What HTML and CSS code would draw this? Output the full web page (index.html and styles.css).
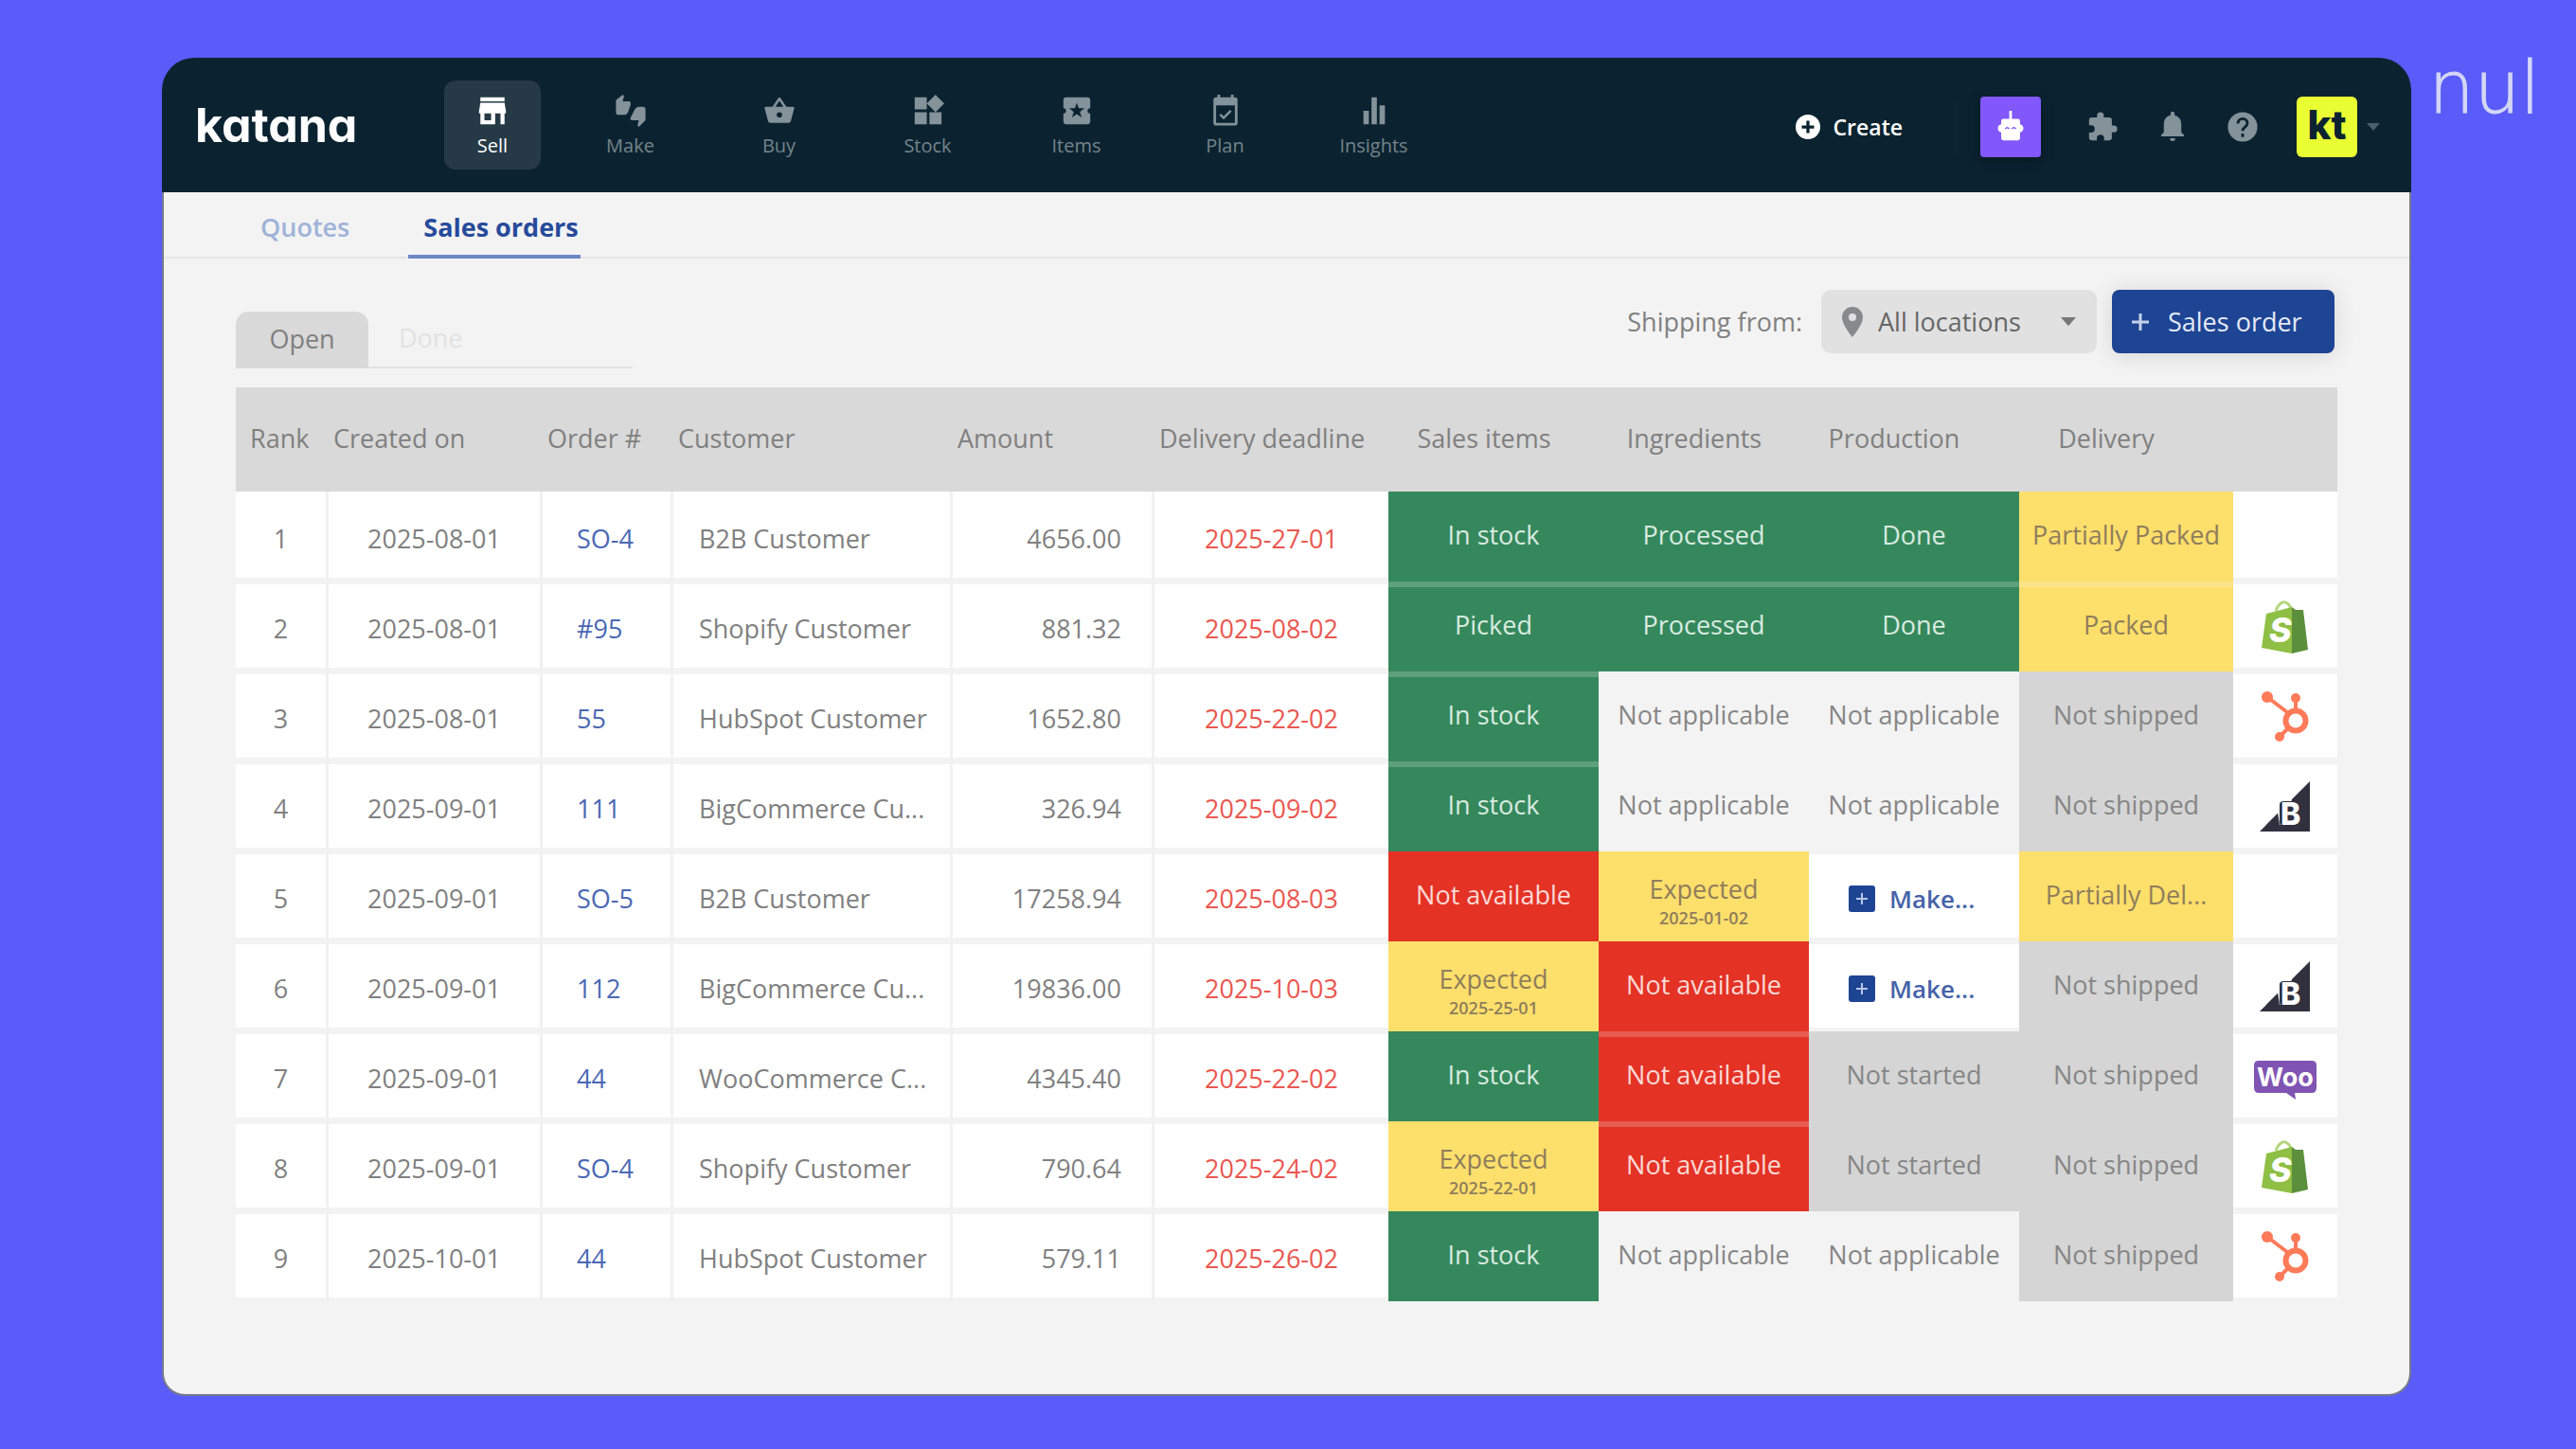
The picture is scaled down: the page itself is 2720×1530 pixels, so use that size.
FILE: index.html
```html
<!DOCTYPE html>
<html lang="en">
<head>
  <meta charset="utf-8">
  <title>Sales orders</title>
  <link rel="stylesheet" href="styles.css">
</head>
<body>
  <!-- shared icons -->
  <svg class="defs" aria-hidden="true">
    <symbol id="shopify" viewBox="0 0 50 56">
      <path d="M15 11C18 3 23 0 27 3c3 2 4 5 4 8" fill="none" stroke="#b5d67f" stroke-width="3"/>
      <path d="M5 14 L32 7 V56 L0 50z" fill="#8fbf45"/>
      <path d="M32 7l4 3h8l5 42-17 4z" fill="#5c8f3c"/>
      <text x="8" y="44" class="mark-s">S</text>
    </symbol>
    <symbol id="hubspot" viewBox="0 0 50 54">
      <g fill="none" stroke="#ff7a59" stroke-width="4">
        <path d="M6 6l21 16M36 20V8M28 39l-8 8"/>
        <circle cx="36" cy="31" r="10.500" stroke-width="6"/>
      </g>
      <g fill="#ff7a59"><circle cx="6" cy="6" r="6"/><circle cx="36" cy="7" r="5"/><circle cx="19" cy="48" r="5"/></g>
    </symbol>
    <symbol id="bigcommerce" viewBox="0 0 54 54">
      <path d="M53 0v53H0z" fill="#30303f"/>
      <path d="M34 17l-15 15 2 14h10z" fill="#fff"/>
      <path d="M19 34v12H7z" fill="#30303f"/>
      <rect x="21" y="21" width="23" height="26" rx="4" fill="#30303f"/>
      <text x="22" y="46" class="mark-b">B</text>
    </symbol>
    <symbol id="woo" viewBox="0 0 66 42">
      <path d="M5 0h56q5 0 5 5v23q0 6-5 6H43l1 7-10-7H5q-5 0-5-6V5q0-5 5-5z" fill="#7f54b3"/>
      <text x="33" y="27" class="mark-woo">Woo</text>
    </symbol>
  </svg>

  <div class="nul">nul</div>

  <div class="window">
    <header class="topbar">
      <a class="logo" href="#">katana</a>
      <nav class="menu">
        <a class="menu-item active" href="#">
          <svg viewBox="0 0 24 24"><path d="M3 2h18v3H3zM3 6h18l1 6v2h-1v8h-3v-8h-4v8H3v-8H2v-2zM6 14v5h5v-5z" fill-rule="evenodd"/></svg>
          <span>Sell</span>
        </a>
        <a class="menu-item" href="#">
          <svg viewBox="0 0 24 24"><path d="M1 4l5-4 1 1-1 4h5q1 0 1 2l-2 6q-1 2-3 2H3q-2 0-2-2z"/><path d="M23 19l-5 5-1-1 1-4h-5q-2 0-1-2l3-6q1-2 3-2h3q2 0 2 2z"/></svg>
          <span>Make</span>
        </a>
        <a class="menu-item" href="#">
          <svg viewBox="0 0 24 24"><path d="M17.200 9L12.800 2.400a1 1 0 0 0-1.600 0L6.800 9H2a1 1 0 0 0-1 1.300l2.500 9.200A2 2 0 0 0 5.500 21h13a2 2 0 0 0 2-1.500L23 10.300A1 1 0 0 0 22 9zM9 9l3-4.400L15 9zm3 8a2 2 0 1 1 0-4 2 2 0 0 1 0 4z"/></svg>
          <span>Buy</span>
        </a>
        <a class="menu-item" href="#">
          <svg viewBox="0 0 24 24"><path d="M2 2h9v9H2zM2 13h9v9H2zM13 13h9v9h-9zM17.500 0L24 6.500 17.500 13 11 6.500z"/></svg>
          <span>Stock</span>
        </a>
        <a class="menu-item" href="#">
          <svg viewBox="0 0 24 24"><path d="M20 12a2 2 0 0 1 2-2V4a2 2 0 0 0-2-2H4a2 2 0 0 0-2 2v6a2 2 0 0 1 0 4v6a2 2 0 0 0 2 2h16a2 2 0 0 0 2-2v-6a2 2 0 0 1-2-2zm-4.400 5L12 14.500 8.400 17l1.300-4.200L6.300 10h4.300L12 6l1.400 4h4.300l-3.400 2.800z"/></svg>
          <span>Items</span>
        </a>
        <a class="menu-item" href="#">
          <svg viewBox="0 0 24 24"><path d="M19 2h-1V0h-2v2H8V0H6v2H5a2 2 0 0 0-2 2v17a2 2 0 0 0 2 2h14a2 2 0 0 0 2-2V4a2 2 0 0 0-2-2zm0 19H5V8h14zM10.600 18.500l6-6-1.200-1.200-4.800 4.800-2-2L7.400 15.300z"/></svg>
          <span>Plan</span>
        </a>
        <a class="menu-item" href="#">
          <svg viewBox="0 0 24 24"><path d="M4 12h4v10H4zM10 2h4v20h-4zM16 8h4v14h-4z"/></svg>
          <span>Insights</span>
        </a>
      </nav>
      <div class="tools">
        <button class="create">
          <svg viewBox="0 0 24 24"><circle cx="12" cy="12" r="12" fill="#fff"/><path d="M12 6v12M6 12h12" stroke="#0b2330" stroke-width="3"/></svg>
          Create
        </button>
        <button class="robot" aria-label="Assistant">
          <svg viewBox="0 0 40 48"><path d="M18 0h4v12h9q3 0 3 3v5q5 1 5 6t-5 6v9q0 3-3 3H9q-3 0-3-3v-9q-5-1-5-6t5-6v-5q0-3 3-3h9z" fill="#fff"/><path d="M12 27q3-4 6 0M22 27q3-4 6 0" fill="none" stroke="#8257fb" stroke-width="2"/></svg>
        </button>
        <div class="tool-icons">
          <button aria-label="Integrations"><svg viewBox="0 0 24 24"><path d="M20.500 11H19V7a2 2 0 0 0-2-2h-4V3.500a2.500 2.500 0 0 0-5 0V5H4a2 2 0 0 0-2 2v3.800h1.500a2.700 2.700 0 0 1 0 5.400H2V20a2 2 0 0 0 2 2h3.800v-1.500a2.700 2.700 0 0 1 5.400 0V22H17a2 2 0 0 0 2-2v-4h1.500a2.500 2.500 0 0 0 0-5z"/></svg></button>
          <button aria-label="Notifications"><svg viewBox="0 0 24 24"><path d="M12 22.500a2 2 0 0 0 2-2h-4a2 2 0 0 0 2 2zM18.500 16v-6c0-3.500-1.800-6-5-6.700V2a1.500 1.500 0 0 0-3 0v1.300c-3.200.7-5 3.200-5 6.700v6l-2 2v1h17v-1z"/></svg></button>
          <button aria-label="Help"><svg viewBox="0 0 24 24"><circle cx="12" cy="12" r="11"/><path d="M8.500 9.500C8.500 4.500 15.500 5 15.500 9.300c0 2.700-3.500 2.900-3.500 5.700M12 17v2.500" fill="none" stroke="#0b2330" stroke-width="2"/></svg></button>
        </div>
        <button class="account"><span class="tile">kt</span><svg class="caret" viewBox="0 0 14 8"><path d="M0 0h14L7 8z"/></svg></button>
      </div>
    </header>

    <main class="page">
      <nav class="tabs">
        <a href="#">Quotes</a>
        <a class="active" href="#">Sales orders</a>
      </nav>

      <div class="toolbar">
        <div class="state-tabs">
          <button class="active">Open</button>
          <button>Done</button>
        </div>
        <div class="actions">
          <label for="location">Shipping from:</label>
          <div class="location">
            <svg class="pin" viewBox="0 0 22 32"><path d="M11 0a11 11 0 0 0-11 11c0 8 11 21 11 21s11-13 11-21A11 11 0 0 0 11 0zm0 15a4 4 0 1 1 0-8 4 4 0 0 1 0 8z"/></svg>
            <select id="location"><option>All locations</option></select>
            <svg class="caret" viewBox="0 0 14 8"><path d="M0 0h14L7 8z"/></svg>
          </div>
          <button class="new-order"><svg viewBox="0 0 18 18"><path d="M9 0v18M0 9h18"/></svg>Sales order</button>
        </div>
      </div>

      <table class="orders">
        <colgroup>
          <col class="c-rank"><col class="c-created"><col class="c-order"><col class="c-customer"><col class="c-amount"><col class="c-deadline">
          <col class="c-status"><col class="c-status"><col class="c-status"><col class="c-delivery"><col class="c-source">
        </colgroup>
        <thead>
          <tr>
            <th class="rank">Rank</th><th>Created on</th><th>Order #</th><th>Customer</th><th>Amount</th><th>Delivery deadline</th>
            <th class="mid">Sales items</th><th class="mid">Ingredients</th><th class="mid far">Production</th><th class="mid far">Delivery</th><th></th>
          </tr>
        </thead>
        <tbody>
          <tr>
            <td class="center">1</td><td class="center">2025-08-01</td><td class="order"><a href="#">SO-4</a></td><td class="customer">B2B Customer</td><td class="amount">4656.00</td><td class="late">2025-27-01</td>
            <td class="status green">In stock</td><td class="status green">Processed</td><td class="status green">Done</td><td class="status yellow">Partially Packed</td><td class="source"></td>
          </tr>
          <tr>
            <td class="center">2</td><td class="center">2025-08-01</td><td class="order"><a href="#">#95</a></td><td class="customer">Shopify Customer</td><td class="amount">881.32</td><td class="late">2025-08-02</td>
            <td class="status green seam">Picked</td><td class="status green seam">Processed</td><td class="status green seam">Done</td><td class="status yellow seam">Packed</td><td class="source"><svg class="shopify"><use href="#shopify"/></svg></td>
          </tr>
          <tr>
            <td class="center">3</td><td class="center">2025-08-01</td><td class="order"><a href="#">55</a></td><td class="customer">HubSpot Customer</td><td class="amount">1652.80</td><td class="late">2025-22-02</td>
            <td class="status green seam">In stock</td><td class="status na">Not applicable</td><td class="status na">Not applicable</td><td class="status grey">Not shipped</td><td class="source"><svg class="hubspot"><use href="#hubspot"/></svg></td>
          </tr>
          <tr>
            <td class="center">4</td><td class="center">2025-09-01</td><td class="order"><a href="#">111</a></td><td class="customer">BigCommerce Cu...</td><td class="amount">326.94</td><td class="late">2025-09-02</td>
            <td class="status green seam">In stock</td><td class="status na">Not applicable</td><td class="status na">Not applicable</td><td class="status grey">Not shipped</td><td class="source"><svg class="bigcommerce"><use href="#bigcommerce"/></svg></td>
          </tr>
          <tr>
            <td class="center">5</td><td class="center">2025-09-01</td><td class="order"><a href="#">SO-5</a></td><td class="customer">B2B Customer</td><td class="amount">17258.94</td><td class="late">2025-08-03</td>
            <td class="status red">Not available</td><td class="status yellow due">Expected<small>2025-01-02</small></td><td class="make"><button><svg viewBox="0 0 28 28"><rect width="28" height="28" rx="3"/><path d="M14 8v12M8 14h12"/></svg>Make...</button></td><td class="status yellow">Partially Del...</td><td class="source"></td>
          </tr>
          <tr>
            <td class="center">6</td><td class="center">2025-09-01</td><td class="order"><a href="#">112</a></td><td class="customer">BigCommerce Cu...</td><td class="amount">19836.00</td><td class="late">2025-10-03</td>
            <td class="status yellow due">Expected<small>2025-25-01</small></td><td class="status red">Not available</td><td class="make"><button><svg viewBox="0 0 28 28"><rect width="28" height="28" rx="3"/><path d="M14 8v12M8 14h12"/></svg>Make...</button></td><td class="status grey">Not shipped</td><td class="source"><svg class="bigcommerce"><use href="#bigcommerce"/></svg></td>
          </tr>
          <tr>
            <td class="center">7</td><td class="center">2025-09-01</td><td class="order"><a href="#">44</a></td><td class="customer">WooCommerce C...</td><td class="amount">4345.40</td><td class="late">2025-22-02</td>
            <td class="status green">In stock</td><td class="status red seam">Not available</td><td class="status grey">Not started</td><td class="status grey">Not shipped</td><td class="source"><svg class="woo"><use href="#woo"/></svg></td>
          </tr>
          <tr>
            <td class="center">8</td><td class="center">2025-09-01</td><td class="order"><a href="#">SO-4</a></td><td class="customer">Shopify Customer</td><td class="amount">790.64</td><td class="late">2025-24-02</td>
            <td class="status yellow due">Expected<small>2025-22-01</small></td><td class="status red seam">Not available</td><td class="status grey">Not started</td><td class="status grey">Not shipped</td><td class="source"><svg class="shopify"><use href="#shopify"/></svg></td>
          </tr>
          <tr>
            <td class="center">9</td><td class="center">2025-10-01</td><td class="order"><a href="#">44</a></td><td class="customer">HubSpot Customer</td><td class="amount">579.11</td><td class="late">2025-26-02</td>
            <td class="status green">In stock</td><td class="status na">Not applicable</td><td class="status na">Not applicable</td><td class="status grey">Not shipped</td><td class="source"><svg class="hubspot"><use href="#hubspot"/></svg></td>
          </tr>
        </tbody>
      </table>
    </main>
  </div>
</body>
</html>
```
FILE: styles.css
```css
* {
  box-sizing: border-box;
}

body {
  margin: 0;
  min-height: 100vh;
  padding: 61px 174px 56px 171px;
  display: flex;
  background: #595cf8;
  font-family: "Open Sans", "Noto Sans", sans-serif;
  font-size: 27px;
  color: #808080;
}

a {
  color: inherit;
  text-decoration: none;
}

button,
select {
  font: inherit;
  color: inherit;
  border: 0;
  padding: 0;
  background: transparent;
  cursor: pointer;
}

svg {
  display: block;
}

.defs {
  display: none;
}

.nul {
  position: absolute;
  top: 48px;
  right: 38px;
  font-family: "DejaVu Sans Light", "DejaVu Sans", sans-serif;
  font-weight: 200;
  font-size: 76px;
  line-height: 90px;
  color: #d3d6f6;
  -webkit-text-stroke: 1px #d3d6f6;
}

.window {
  flex: 1;
  display: flex;
  flex-direction: column;
}

/* top bar */
.topbar {
  display: flex;
  align-items: center;
  height: 142px;
  padding: 0 33px 0 35px;
  background: #0b2330;
  border-radius: 34px 34px 0 0;
}

.logo {
  width: 263px;
  font-family: Inter, sans-serif;
  font-weight: 700;
  font-size: 50px;
  font-feature-settings: "cv11";
  color: #fff;
}

.menu {
  display: flex;
}

.menu-item {
  display: flex;
  flex-direction: column;
  align-items: center;
  gap: 8px;
  width: 157px;
  height: 94px;
  padding-top: 15px;
  font-size: 20px;
  line-height: 24px;
  color: #75848b;
}

.menu-item svg {
  width: 34px;
  height: 34px;
  fill: #84929a;
}

.menu-item.active {
  width: 102px;
  margin-right: 16px;
  border-radius: 12px;
  background: #253a46;
  color: #fff;
}

.menu-item.active svg {
  fill: #fff;
}

.tools {
  display: flex;
  align-items: center;
  margin-left: auto;
  padding-top: 4px;
}

.create {
  display: flex;
  align-items: center;
  gap: 14px;
  padding-right: 56px;
  margin-right: 24px;
  height: 56px;
  border-right: 2px solid #102733;
  font-size: 23px;
  font-weight: 600;
  color: #fff;
}

.create svg {
  width: 26px;
}

.robot {
  display: flex;
  justify-content: center;
  align-items: center;
  width: 64px;
  height: 64px;
  border-radius: 4px;
  background: #8257fb;
  box-shadow: 0 4px 12px #071822;
}

.robot svg {
  width: 38px;
  height: 34px;
}

.tool-icons {
  display: flex;
  gap: 40px;
  margin: 0 40px 0 48px;
}

.tool-icons svg {
  width: 34px;
  fill: #84929a;
}

.account {
  display: flex;
  align-items: center;
  gap: 10px;
}

.tile {
  width: 64px;
  height: 64px;
  border-radius: 6px;
  background: #e9ff33;
  color: #0b2330;
  font-family: Inter, sans-serif;
  font-weight: 800;
  font-size: 42px;
  line-height: 60px;
}

.account .caret {
  width: 14px;
  fill: #4b5f6a;
}

/* page */
.page {
  flex: 1;
  background: #f3f3f3;
  border: 2px solid #77798c;
  border-top: 0;
  border-radius: 0 0 24px 24px;
}

.tabs {
  display: flex;
  gap: 60px;
  height: 70px;
  padding-left: 86px;
  border-bottom: 2px solid #e6e6e6;
  font-weight: 600;
  color: #9fb3d9;
}

.tabs a {
  height: 70px;
  padding: 0 2px 0 16px;
  line-height: 74px;
}

.tabs .active {
  border-bottom: 4px solid #6c88c4;
  font-weight: 700;
  color: #264a9b;
}

.toolbar {
  display: flex;
  justify-content: space-between;
  padding: 33px 76px 20px;
}

.state-tabs {
  display: flex;
  align-self: flex-end;
  width: 419px;
  margin-top: 23px;
}

.state-tabs button {
  flex: 1;
  height: 60px;
  padding: 0 0 4px 32px;
  border-bottom: 2px solid #e2e2e2;
  text-align: left;
  color: #e2e2e2;
}

.state-tabs .active {
  flex: 0 0 140px;
  padding: 0 0 4px;
  border: 0;
  border-radius: 14px 14px 0 0;
  background: #d9d9d9;
  text-align: center;
  color: #808080;
}

.actions {
  display: flex;
  align-items: center;
  align-self: flex-start;
  gap: 16px;
  margin-right: 3px;
}

.actions label {
  margin-right: 4px;
}

.location {
  display: flex;
  align-items: center;
  width: 291px;
  height: 67px;
  padding: 0 22px;
  border-radius: 10px;
  background: #e1e1e1;
  color: #666;
}

.location select {
  flex: 1;
  height: 100%;
  margin-left: 16px;
  appearance: none;
}

.location .pin {
  width: 22px;
  fill: #868a8c;
}

.location .caret {
  width: 16px;
  fill: #777;
  pointer-events: none;
}

.new-order {
  display: flex;
  align-items: center;
  gap: 20px;
  height: 67px;
  width: 235px;
  padding-left: 21px;
  border-radius: 8px;
  background: #1e4494;
  color: #e4eaf6;
  box-shadow: 0 2px 24px rgba(0, 0, 0, 0.12);
}

.new-order svg {
  width: 18px;
  stroke: #c5d1ea;
  stroke-width: 3;
}

/* orders table */
.orders {
  width: calc(100% - 152px);
  margin: 0 76px 95px;
  table-layout: fixed;
  border-spacing: 0;
}

.c-rank { width: 98px; }
.c-created { width: 226px; }
.c-order { width: 138px; }
.c-customer { width: 295px; }
.c-amount { width: 213px; }
.c-deadline { width: 247px; }
.c-status { width: 222px; }
.c-delivery { width: 226px; }
.c-source { width: 110px; }

.orders th {
  height: 110px;
  padding: 0 0 4px 5px;
  background: #d9d9d9;
  font-weight: 400;
  text-align: left;
}

.orders .rank {
  padding-left: 15px;
}

.orders .mid {
  padding: 0 20px 4px 0;
  text-align: center;
}

.orders .far {
  padding-right: 42px;
}

.orders td {
  height: 95px;
  padding: 5px 0 0;
  background: #fff;
  border-right: 3px solid #f1f1f1;
  box-shadow: inset 0 3px #f3f3f3, inset 0 -4px #f3f3f3;
  line-height: 32px;
  white-space: nowrap;
}

.orders tr:first-child td {
  box-shadow: inset 0 -4px #f3f3f3;
}

.orders .center {
  text-align: center;
}

.orders .order {
  padding-left: 36px;
  color: #4a68b4;
}

.orders .customer {
  padding-left: 27px;
}

.orders .amount {
  padding-right: 32px;
  text-align: right;
}

.orders .late {
  border-right: 0;
  text-align: center;
  color: #ea5750;
}

.orders .status {
  padding: 0 0 3px;
  border-right: 0;
  text-align: center;
}

.orders tr td.status {
  box-shadow: none;
}

.orders tr td.seam {
  box-shadow: inset 0 6px rgba(243, 243, 243, 0.22);
}

.orders .green { background: #35885c; color: #d9ebe1; }
.orders .red { background: #e43225; color: #fbd9d6; }
.orders .yellow { background: #fddf6b; color: #8f7d5c; }
.orders .grey { background: #d5d5d5; color: #868686; }
.orders .na { background: #f3f3f3; color: #868686; }

.orders .due {
  padding: 12px 0 0;
}

.status small {
  display: block;
  font-size: 18px;
  font-weight: 600;
  line-height: 28px;
}

.orders .make {
  border-right: 0;
  padding-left: 42px;
}

.make button {
  display: flex;
  align-items: center;
  gap: 15px;
  font-size: 26px;
  font-weight: 600;
  color: #4562a8;
}

.make svg {
  width: 28px;
  fill: #1e4494;
  stroke: #b8c6e4;
  stroke-width: 2;
}

.make rect {
  stroke: none;
}

.orders .source {
  padding: 0;
  border-right: 0;
}

.source svg {
  margin: 0 auto;
}

.shopify { width: 50px; height: 56px; }
.hubspot { width: 50px; height: 54px; }
.bigcommerce { width: 54px; height: 54px; }
.woo { width: 66px; height: 42px; }

.source .woo {
  margin-top: 8px;
}

.mark-s,
.mark-b,
.mark-woo {
  fill: #fff;
  font-family: Inter, sans-serif;
  font-weight: 800;
}

.mark-s {
  font-size: 36px;
  font-style: italic;
}

.mark-b {
  font-size: 32px;
}

.mark-woo {
  font-size: 27px;
  font-weight: 700;
  text-anchor: middle;
}
```
